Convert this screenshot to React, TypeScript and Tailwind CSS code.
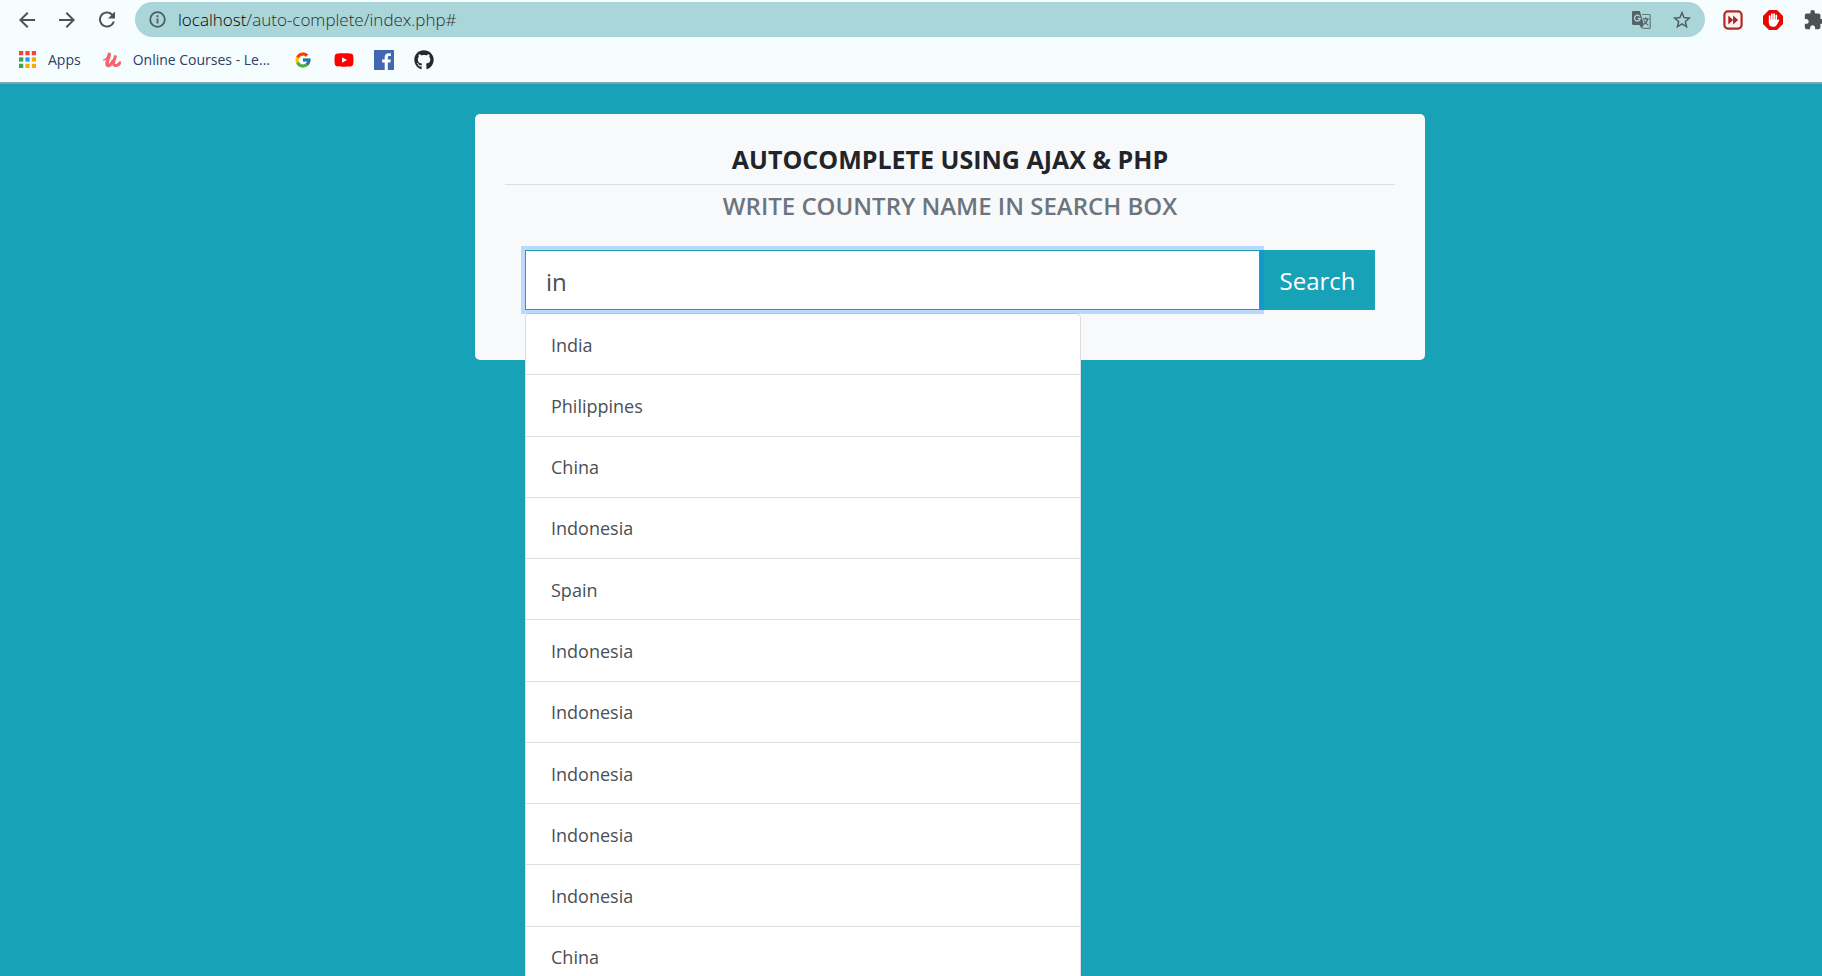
import React from "react";
import {
  MdArrowBack,
  MdArrowForward,
  MdRefresh,
  MdStarBorder,
  MdExtension,
} from "react-icons/md";
import { FcGoogle } from "react-icons/fc";
import { FaYoutube, FaGithub } from "react-icons/fa";

const countries = [
  "India",
  "Philippines",
  "China",
  "Indonesia",
  "Spain",
  "Indonesia",
  "Indonesia",
  "Indonesia",
  "Indonesia",
  "Indonesia",
  "China",
];

const appDots = [
  "#f9423a", "#f9423a", "#f9423a",
  "#34a853", "#2196f3", "#fbab00",
  "#34a853", "#fbab00", "#fbab00",
];

function AppsIcon() {
  return (
    <svg className="h-[17px] w-[17px]" viewBox="0 0 16 16" aria-hidden="true">
      {appDots.map((fill, i) => (
        <rect key={i} x={(i % 3) * 6} y={Math.floor(i / 3) * 6} width="4" height="4" fill={fill} />
      ))}
    </svg>
  );
}

function InfoIcon() {
  return (
    <svg className="h-[17px] w-[17px] shrink-0" viewBox="0 0 17 17" fill="none" stroke="currentColor" strokeWidth="1.800" aria-hidden="true">
      <circle cx="8.500" cy="8.500" r="7.300" />
      <path d="M8.500 7.500v5M8.500 4.300v1.900" />
    </svg>
  );
}

function TranslateIcon() {
  return (
    <svg className="h-[18px] w-[19px]" viewBox="0 0 19 18" fill="none" aria-hidden="true">
      <path d="M10 3.500h7.300c.5 0 .9.4.9.9v12c0 .5-.4.9-.9.9H10.500" stroke="#65787b" strokeWidth="1.200" />
      <path d="M1.200 0h6.600l4.200 14H1.200C.5 14 0 13.500 0 12.800V1.200C0 .5.500 0 1.200 0z" fill="#566266" />
      <path d="M7.500 14h4.300L9.500 17.500z" fill="#566266" />
      <path d="M7.700 5.300A2.900 2.900 0 1 0 8.300 7.500H5.700" stroke="#aad6d9" strokeWidth="1.300" />
      <path d="M10.800 7.800h6M13.700 6.300v1.500M15.800 7.800c-.5 2.500-2 4.300-4.300 5.700M12 9.500c1 2 2.300 3.400 4.300 4.800" stroke="#566266" strokeWidth="1.200" />
    </svg>
  );
}

function UdemyIcon() {
  return (
    <svg className="h-4 w-[18px]" viewBox="0 0 18 16" fill="none" stroke="#f4646a" strokeLinecap="round" strokeLinejoin="round" aria-hidden="true">
      <path d="M.8 8C2.800 7.500 4.800 5 5.800 2.400" strokeWidth="1.400" />
      <path d="M6.300 2.200C5.800 5.500 4 9.300 4 11.500C4 15 7.800 13.800 10.200 9" strokeWidth="3.500" />
      <path d="M12.300 4.600C11.400 7 10.300 9.800 10.600 11.800C11.200 14.800 15.400 13.600 17 10.800" strokeWidth="3" />
    </svg>
  );
}

function FacebookIcon() {
  return (
    <svg className="h-5 w-5" viewBox="0 0 20 20" aria-hidden="true">
      <rect width="20" height="20" rx="0.600" fill="#4267b2" />
      <path d="M10.700 20v-7.600H8.100V9.400h2.600V7.200c0-2.600 1.600-4 3.900-4 1.100 0 2 .1 2.300.1V6h-1.600c-1.200 0-1.500.6-1.500 1.500v1.900h3l-.4 3h-2.600V20z" fill="#fff" />
    </svg>
  );
}

function SkipIcon() {
  return (
    <svg className="h-5 w-5" viewBox="0 0 20 20" aria-hidden="true">
      <rect x="1.400" y="1.400" width="17.200" height="17.200" rx="3.500" fill="#fdf3f2" stroke="#b52a28" strokeWidth="2.200" />
      <path d="M5.300 5.500l4.800 4.500-4.800 4.500zM10.100 5.500l5 4.500-5 4.500z" fill="#a82422" />
    </svg>
  );
}

function StopHandIcon() {
  return (
    <svg className="h-5 w-5" viewBox="0 0 20 20" aria-hidden="true">
      <path d="M6 0h8l6 6v8l-6 6H6l-6-6V6z" fill="#e90606" />
      <g stroke="#fff" strokeWidth="1.700" strokeLinecap="round">
        <path d="M6.700 6v6M8.900 4v7M11.100 4v7M13.300 5.400v7" />
      </g>
      <path d="M5.850 9.500h8.300v.8l1.100-.8c.8-.4 1.400.3 1 .9l-2.400 4.400c-.8 1.400-1.800 2-3.500 2-3 0-4.500-1.600-4.500-4z" fill="#fff" />
    </svg>
  );
}

export default function App() {
  return (
    <div className="flex h-screen flex-col overflow-hidden bg-[#18a2b8] font-['Open_Sans','Noto_Sans',sans-serif]">
      <header className="border-b-2 border-[#84a5ab] bg-[#f5fdff]">
        <div className="flex h-[39px] items-center overflow-hidden pl-[15px]">
          <nav className="flex shrink-0 items-center gap-4 text-[#4d5255]">
            <button aria-label="Back" className="flex w-6 justify-center"><MdArrowBack size={24} /></button>
            <button aria-label="Forward" className="flex w-6 justify-center"><MdArrowForward size={24} /></button>
            <button aria-label="Reload" className="flex w-6 justify-center"><MdRefresh size={25} /></button>
          </nav>
          <div className="ml-4 flex h-[35px] grow items-center rounded-full bg-[#aad6d9] pr-3 pl-[14px] text-[#505b5e]">
            <InfoIcon />
            <span className="ml-3 grow text-[17px] leading-6 font-light whitespace-nowrap text-[#263033]">
              <span className="text-black">localhost</span>/auto-complete/index.php#
            </span>
            <button aria-label="Translate this page"><TranslateIcon /></button>
            <button aria-label="Bookmark this page" className="ml-5"><MdStarBorder size={22} /></button>
          </div>
          <div className="-mr-[3px] ml-[18px] flex shrink-0 items-center gap-5 text-[#4d5255]">
            <button aria-label="Skip"><SkipIcon /></button>
            <button aria-label="Ad blocker"><StopHandIcon /></button>
            <button aria-label="Extensions"><MdExtension size={22} /></button>
          </div>
        </div>
        <nav className="flex h-[43px] items-center pb-[2px] pl-[19px] text-[14px] text-[#2b4166]">
          <a href="#apps" className="flex items-center gap-3"><AppsIcon />Apps</a>
          <a href="#courses" className="ml-[22px] flex items-center gap-3 whitespace-nowrap"><UdemyIcon />Online Courses - Le...</a>
          <a href="#google" aria-label="Google" className="ml-6"><FcGoogle size={18} /></a>
          <a href="#youtube" aria-label="YouTube" className="ml-[22px] text-[#fe0000]"><FaYoutube size={20} /></a>
          <a href="#facebook" aria-label="Facebook" className="ml-5"><FacebookIcon /></a>
          <a href="#github" aria-label="GitHub" className="ml-5 text-[#24292e]"><FaGithub size={20} /></a>
        </nav>
      </header>

      <main className="flex justify-center pt-[30px] pl-[78px]">
        <section className="w-full max-w-[950px] rounded-[5px] bg-[#f8f9fb] px-[30px] pt-[30px] pb-[50px] text-center">
          <h1 className="border-b border-[#dcdee0] pb-[10px] text-[25px] leading-[30px] font-bold text-[#212529]">
            AUTOCOMPLETE USING AJAX &amp; PHP
          </h1>
          <h2 className="mt-[6px] text-[24px] leading-[30px] font-semibold text-[#6c757d]">
            WRITE COUNTRY NAME IN SEARCH BOX
          </h2>
          <form className="relative mx-5 mt-[29px] flex" onSubmit={(e) => e.preventDefault()}>
            <input
              type="text"
              aria-label="Country name"
              defaultValue="in"
              className="relative z-10 h-[60px] min-w-0 grow border border-[#18a2b8] bg-white px-5 pt-[2px] text-[24px] text-[#495057] shadow-[0_0_0_4px_rgba(0,123,255,0.25)] outline-none"
            />
            <button type="submit" className="h-[60px] w-[115px] shrink-0 bg-[#18a2b8] pt-[2px] text-[24px] text-white">
              Search
            </button>
            <ul className="absolute top-[63px] left-0 grid h-[676px] w-[556px] auto-rows-fr rounded-t-[5px] border border-[#dcdedf] bg-white text-left">
              {countries.map((country, i) => (
                <li key={i} className="border-b border-[#dcdedf]">
                  <a href="#" className="flex h-full items-center px-[25px] pt-[2px] text-[18px] text-[#495057]">
                    {country}
                  </a>
                </li>
              ))}
            </ul>
          </form>
        </section>
      </main>
    </div>
  );
}
